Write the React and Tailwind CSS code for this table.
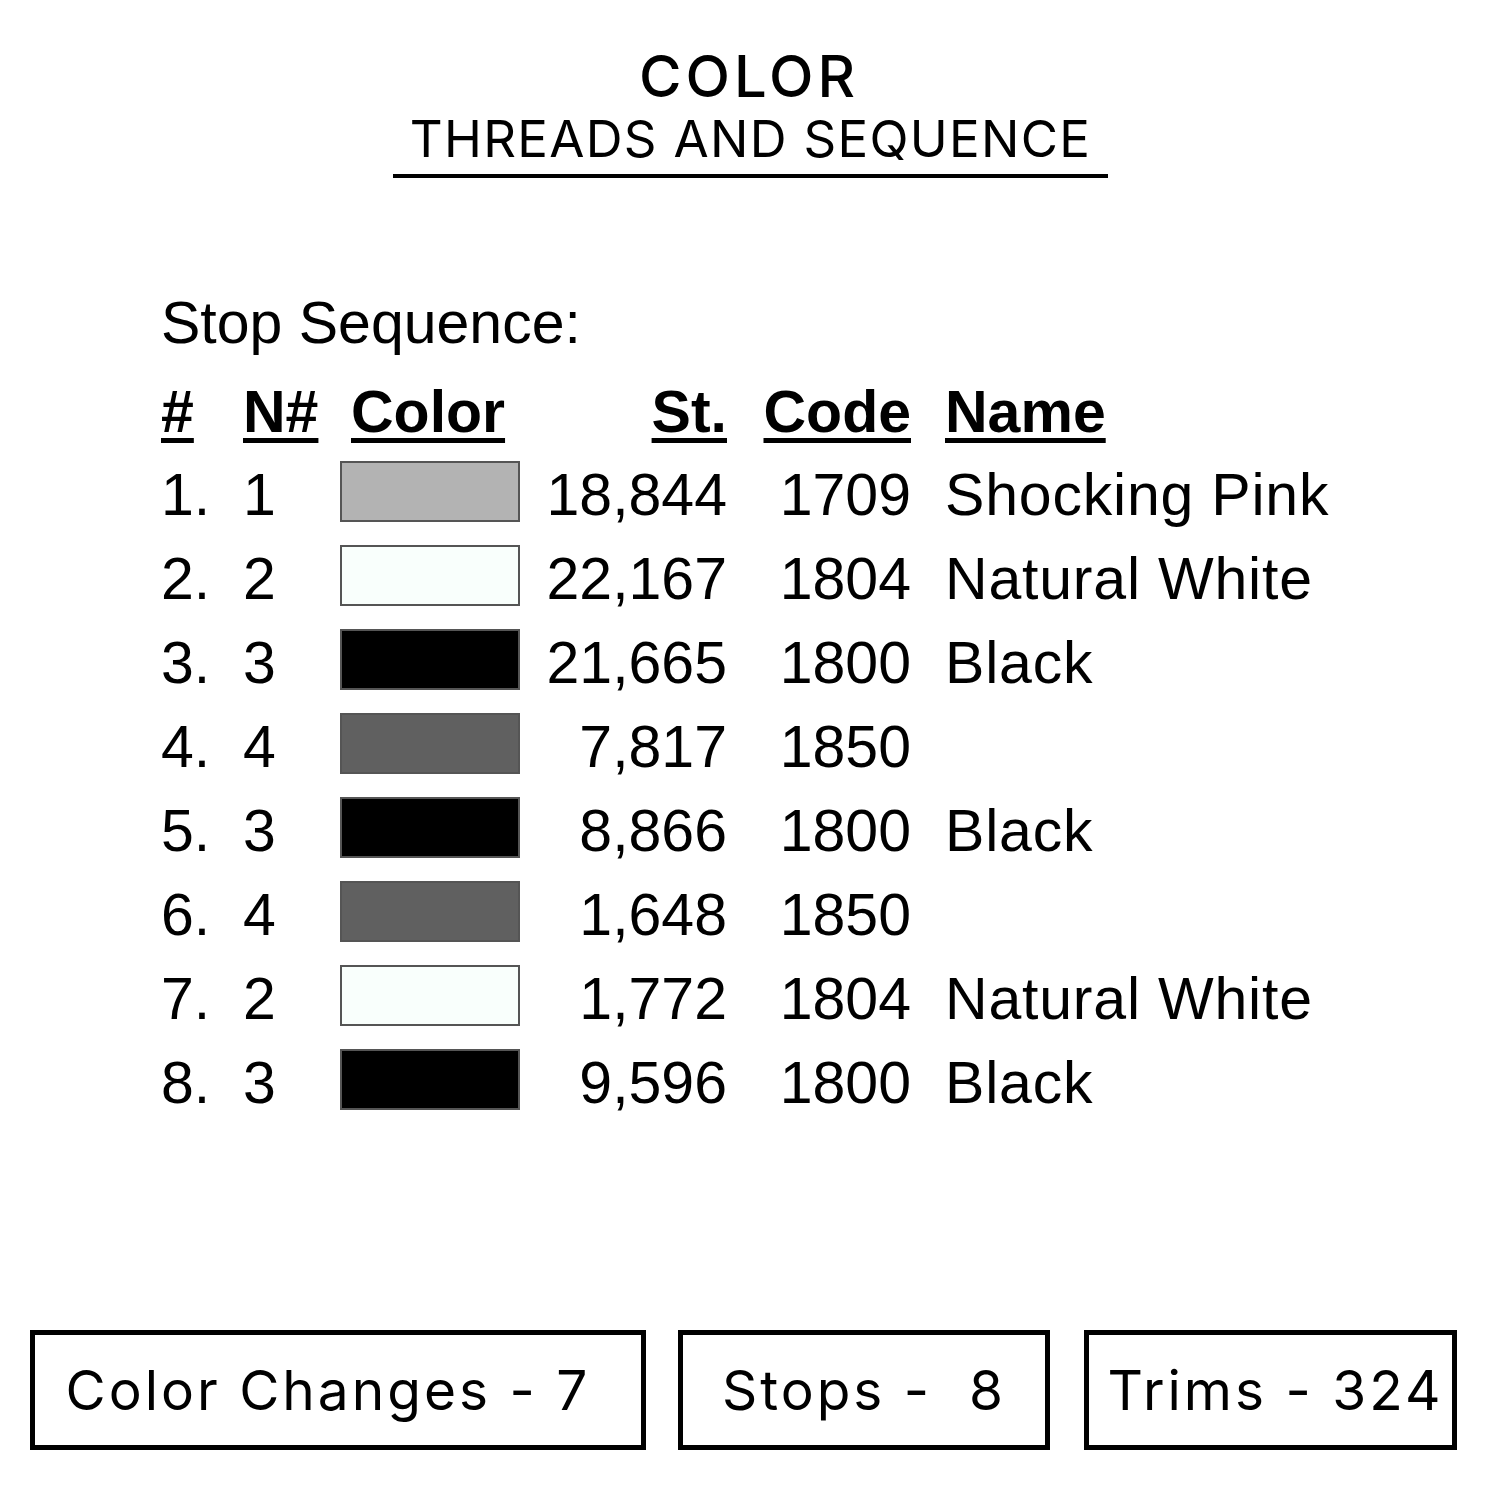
import React from "react"

const rows = [
  { n: "1.", needle: "1", color: "bg-[#b3b3b3]", st: "18,844", code: "1709", name: "Shocking Pink" },
  { n: "2.", needle: "2", color: "bg-[#f9fffc]", st: "22,167", code: "1804", name: "Natural White" },
  { n: "3.", needle: "3", color: "bg-black", st: "21,665", code: "1800", name: "Black" },
  { n: "4.", needle: "4", color: "bg-[#606060]", st: "7,817", code: "1850", name: "" },
  { n: "5.", needle: "3", color: "bg-black", st: "8,866", code: "1800", name: "Black" },
  { n: "6.", needle: "4", color: "bg-[#606060]", st: "1,648", code: "1850", name: "" },
  { n: "7.", needle: "2", color: "bg-[#f9fffc]", st: "1,772", code: "1804", name: "Natural White" },
  { n: "8.", needle: "3", color: "bg-black", st: "9,596", code: "1800", name: "Black" },
]

const grid = "grid grid-cols-[82px_97px_180px_207px_184px_1fr] items-center"
const head = "font-bold underline decoration-[5px] underline-offset-[6px]"

const Stat = ({ label, className }) => (
  <div className={`h-[120px] border-[5px] border-black flex items-center justify-center ${className}`}>
    <span className="text-[55px] leading-none whitespace-pre tracking-[3px]">{label}</span>
  </div>
)

const App = () => {
  return (
    <div className="w-[1500px] h-[1500px] bg-white text-black flex flex-col">
      <div className="flex flex-col items-center pt-[47px] font-['Inter',sans-serif]">
        <h1 className="text-[58px] leading-none font-medium tracking-[4px] pr-[2px]">COLOR</h1>
        <h2 className="text-[51px] leading-none mt-[8px] font-normal tracking-[1.3px] pl-[1px]">THREADS AND SEQUENCE</h2>
        <div className="w-[715px] h-[4px] bg-black mt-[10px]" />
      </div>

      <div className="pl-[161px] mt-[116px] font-['Liberation_Sans',Arial,sans-serif] text-[59px] leading-none">
        <p>Stop Sequence:</p>
        <div className={`${grid} h-[81px] mt-[19px]`}>
          <span className={`${head} justify-self-start`}>#</span>
          <span className={`${head} justify-self-start`}>N#</span>
          <span className={`${head} justify-self-start ml-[11px]`}>Color</span>
          <span className={`${head} justify-self-end`}>St.</span>
          <span className={`${head} justify-self-end`}>Code</span>
          <span className={`${head} justify-self-start ml-[34px]`}>Name</span>
        </div>
        {rows.map((r, i) => (
          <div key={i} className={`${grid} h-[84px]`}>
            <span>{r.n}</span>
            <span>{r.needle}</span>
            <div className={`w-[180px] h-[61px] mb-[7px] border-2 border-[#555] ${r.color}`} />
            <span className="justify-self-end">{r.st}</span>
            <span className="justify-self-end">{r.code}</span>
            <span className="ml-[34px] whitespace-nowrap tracking-[0.8px]">{r.name}</span>
          </div>
        ))}
      </div>

      <div className="mt-auto mb-[50px] pl-[30px] flex font-['Inter',sans-serif]">
        <Stat label="Color Changes - 7" className="w-[616px] pr-[20px]" />
        <Stat label="Stops -  8" className="w-[372px] ml-[32px]" />
        <Stat label="Trims - 324" className="w-[373px] ml-[34px] pl-[10px]" />
      </div>
    </div>
  )
}

export default App
